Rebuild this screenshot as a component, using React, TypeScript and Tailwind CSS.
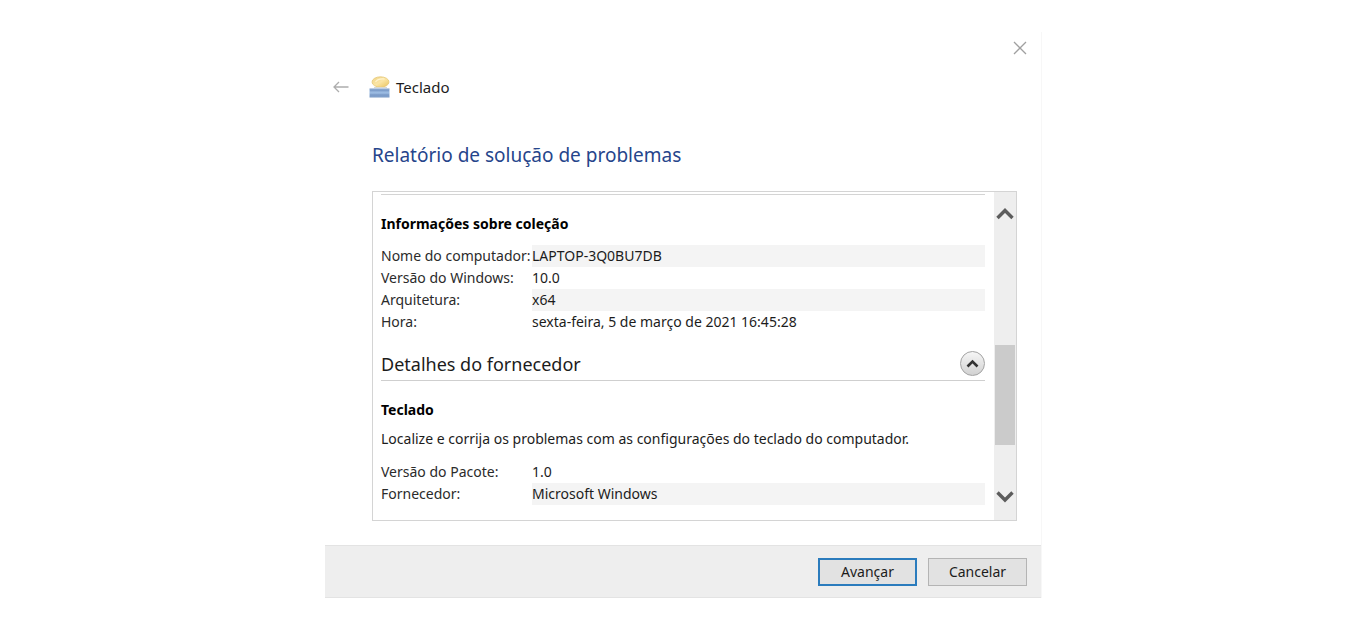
import React from 'react';

interface DetailRow {
  label: string;
  value: string;
  shaded?: boolean;
}

const collectionRows: DetailRow[] = [
  { label: 'Nome do computador:', value: 'LAPTOP-3Q0BU7DB', shaded: true },
  { label: 'Versão do Windows:', value: '10.0' },
  { label: 'Arquitetura:', value: 'x64', shaded: true },
  { label: 'Hora:', value: 'sexta-feira, 5 de março de 2021 16:45:28' },
];

const providerRows: DetailRow[] = [
  { label: 'Versão do Pacote:', value: '1.0' },
  { label: 'Fornecedor:', value: 'Microsoft Windows', shaded: true },
];

function DetailTable({ rows }: { rows: DetailRow[] }) {
  return (
    <table className="w-full table-fixed border-collapse">
      <tbody>
        {rows.map((row) => (
          <tr key={row.label} className="h-[22px]">
            <th scope="row" className="w-[151px] p-0 text-left text-[14px] leading-[22px] font-normal whitespace-nowrap text-[#2b2b2b]">
              {row.label}
            </th>
            <td className={row.shaded ? 'bg-[#f4f4f4] p-0 text-[14px] leading-[22px]' : 'p-0 text-[14px] leading-[22px]'}>
              {row.value}
            </td>
          </tr>
        ))}
      </tbody>
    </table>
  );
}

function KeyboardIcon() {
  return (
    <svg width="21" height="22" viewBox="0 0 21 22" aria-hidden="true">
      <defs>
        <linearGradient id="disc" x1="0" y1="0" x2="1" y2="1">
          <stop offset="0" stopColor="#f0d488" />
          <stop offset="0.5" stopColor="#fbe5a4" />
          <stop offset="1" stopColor="#e9c25c" />
        </linearGradient>
        <linearGradient id="base" x1="0" y1="0" x2="0" y2="1">
          <stop offset="0" stopColor="#7d9cc6" />
          <stop offset="0.4" stopColor="#9dbde4" />
          <stop offset="1" stopColor="#7898c4" />
        </linearGradient>
      </defs>
      <ellipse cx="11.5" cy="6" rx="8.5" ry="5.2" fill="url(#disc)" stroke="#e6c877" strokeWidth="0.8" />
      <path d="M6.5 6c2-3 5-3.5 9-3" fill="none" stroke="#fff4cf" strokeWidth="1.2" />
      <path d="M5 11.5h13" stroke="#d9d9d0" strokeWidth="1" />
      <rect x="0.5" y="12.5" width="20" height="9" fill="url(#base)" />
      <path d="M1 14.8h19M1 19h19" stroke="#6488bb" strokeWidth="0.6" />
    </svg>
  );
}

function ScrollArrow({ down }: { down?: boolean }) {
  return (
    <svg width="18" height="14" viewBox="0 0 18 14" aria-hidden="true">
      <path
        d={down ? 'M1.5 2.5L9 10l7.5-7.5' : 'M1.5 11L9 3.5l7.5 7.5'}
        fill="none"
        stroke="#5c5c5c"
        strokeWidth="3.4"
      />
    </svg>
  );
}

export default function App() {
  return (
    <div className="min-h-screen bg-white py-8 pl-[17px] font-['Noto_Sans',sans-serif] text-[#1c1c1c]">
      <main className="mx-auto flex max-w-[717px] flex-col border-r border-[#f7f7f7]">
        <div className="flex h-8 justify-end pr-[14px]">
          <button aria-label="Fechar" className="flex items-center justify-center">
            <svg width="14" height="14" viewBox="0 0 14 14" aria-hidden="true">
              <path d="M1 1l12 12M13 1L1 13" stroke="#a0a0a0" strokeWidth="1.3" />
            </svg>
          </button>
        </div>

        <header className="flex h-[46px] items-center pl-2">
          <button aria-label="Voltar">
            <svg width="16" height="12" viewBox="0 0 16 12" aria-hidden="true">
              <path d="M15.5 6H1M6 1L1 6l5 5" fill="none" stroke="#adadad" strokeWidth="1.3" />
            </svg>
          </button>
          <div className="ml-5 flex items-center gap-[6px]">
            <KeyboardIcon />
            <span className="text-[15px] leading-5">Teclado</span>
          </div>
        </header>

        <section className="pr-6 pl-[47px]">
          <h1 className="mt-[31px] text-[19px] leading-7 text-[#26458b]">Relatório de solução de problemas</h1>

          <div className="mt-[22px] flex border border-[#d4d4d4]">
            <div className="min-w-0 flex-1 pt-[2px] pr-[9px] pb-[15px] pl-2">
              <hr className="border-[#d4d4d4]" />
              <h3 className="mt-[19px] text-[14px] leading-5 font-bold text-black">Informações sobre coleção</h3>
              <div className="mt-[11px]">
                <DetailTable rows={collectionRows} />
              </div>

              <div className="mt-[15px] flex h-[33px] items-center justify-between border-b border-[#cfcfcf] pb-px">
                <h2 className="text-[18px] leading-7">Detalhes do fornecedor</h2>
                <button
                  aria-label="Recolher detalhes do fornecedor"
                  className="flex size-[25px] items-center justify-center rounded-full border border-[#a3a3a3] bg-linear-to-b from-[#f6f6f6] to-[#d2d2d2]"
                >
                  <svg width="13" height="9" viewBox="0 0 13 9" aria-hidden="true">
                    <path d="M1.5 7.5l5-5 5 5" fill="none" stroke="#333" strokeWidth="2.6" />
                  </svg>
                </button>
              </div>

              <h3 className="mt-[19px] text-[14px] leading-5 font-bold text-black">Teclado</h3>
              <p className="mt-[9px] text-[14px] leading-5">
                Localize e corrija os problemas com as configurações do teclado do computador.
              </p>
              <div className="mt-3">
                <DetailTable rows={providerRows} />
              </div>
            </div>

            <div className="flex w-[22px] flex-col bg-[#eeeeee]">
              <button aria-label="Rolar para cima" className="flex h-[44px] items-center justify-center">
                <ScrollArrow />
              </button>
              <div className="mt-[109px] mr-px ml-px h-[100px] bg-[#cbcbcb]" />
              <button aria-label="Rolar para baixo" className="mt-auto flex h-[46px] items-center justify-center">
                <ScrollArrow down />
              </button>
            </div>
          </div>
        </section>

        <footer className="mt-6 flex h-[53px] items-center justify-end gap-[11px] border-y border-[#e3e3e3] bg-[#eeeeee] pr-[14px]">
          <button className="h-7 w-[99px] border-2 border-[#2b7cbd] bg-[#e2e2e2] text-[14px]">Avançar</button>
          <button className="h-7 w-[99px] border border-[#b4b4b4] bg-[#e2e2e2] text-[14px]">Cancelar</button>
        </footer>
      </main>
    </div>
  );
}
